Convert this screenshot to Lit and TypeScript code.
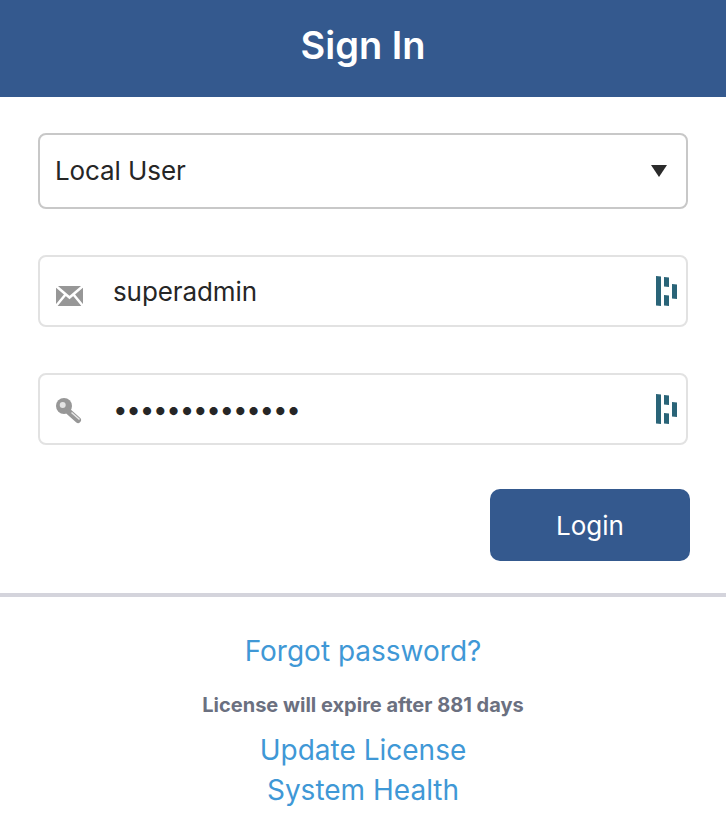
import { LitElement, html, css } from 'lit';
import { customElement } from 'lit/decorators.js';

@customElement('app-root')
export class AppRoot extends LitElement {
  static styles = css`
    :host {
      display: block;
      width: 726px;
      height: 826px;
      background: #fff;
      font-family: Inter, "Liberation Sans", sans-serif;
      color: #262626;
      overflow: hidden;
    }
    .header {
      box-sizing: border-box;
      height: 97px;
      padding-bottom: 8px;
      background: #34598e;
      color: #fff;
      display: flex;
      align-items: center;
      justify-content: center;
      font-size: 38px;
      font-weight: 600;
    }
    .form {
      height: 496px;
      box-sizing: border-box;
      padding: 36px 36px 0 38px;
      display: flex;
      flex-direction: column;
    }
    .select {
      box-sizing: border-box;
      width: 650px;
      height: 76px;
      border: 2px solid #c8c8c8;
      border-radius: 8px;
      padding: 0 19px 2px 15px;
      display: flex;
      align-items: center;
      justify-content: space-between;
      font-size: 26px;
      letter-spacing: -0.1px;
    }
    .arrow {
      width: 0;
      height: 0;
      margin-top: 2px;
      border-left: 8px solid transparent;
      border-right: 8px solid transparent;
      border-top: 12px solid #2b2b2b;
    }
    .field {
      box-sizing: border-box;
      width: 650px;
      height: 72px;
      border: 2px solid #e2e2e2;
      border-radius: 8px;
      margin-top: 46px;
      padding: 0 8px 0 15px;
      display: flex;
      align-items: center;
      font-size: 26px;
    }
    .lead {
      width: 30px;
      height: 30px;
      flex: none;
    }
    .value {
      flex: 1;
      margin-left: 28px;
      letter-spacing: -0.1px;
    }
    .dots {
      letter-spacing: -1.3px;
    }
    .dash { width: 24px; height: 32px; flex: none; }
    .actions {
      display: flex;
      justify-content: flex-end;
      margin-top: 44px;
    }
    .login {
      width: 200px;
      height: 72px;
      border-radius: 10px;
      background: #34598e;
      color: #fff;
      font-size: 26px;
      display: flex;
      align-items: center;
      justify-content: center;
    }
    .footer {
      border-top: 4px solid #d4d4dc;
      display: flex;
      flex-direction: column;
      align-items: center;
      padding-top: 34px;
    }
    .link {
      color: #3f98d6;
      font-size: 28px;
      line-height: 40px;
    }
    .license {
      color: #6b7080;
      font-size: 20px;
      font-weight: 700;
      line-height: 24px;
      margin: 22px 0 13px;
    }
  `;

  render() {
    return html`
      <div class="header">Sign In</div>
      <div class="form">
        <div class="select"><span>Local User</span><span class="arrow"></span></div>
        <div class="field">
          <svg class="lead" viewBox="0 0 30 30">
            <rect x="1" y="10" width="27" height="20" fill="#979797" />
            <path d="M1 10l13.500 11.500L28 10M1 30l9.500-11.500M28 30l-9.500-11.500" fill="none" stroke="#fff" stroke-width="2.500" />
          </svg>
          <span class="value">superadmin</span>
          ${this.dashIcon()}
        </div>
        <div class="field">
          <svg class="lead" viewBox="0 0 30 30">
            <circle cx="9" cy="12" r="8" fill="#979797" />
            <circle cx="7.700" cy="11" r="3" fill="#e4e4e4" />
            <path d="M14 18l9 8" stroke="#979797" stroke-width="6" stroke-linecap="round" />
            <path d="M16.500 18.500l8 7" stroke="#e8e8e8" stroke-width="1.500" />
          </svg>
          <span class="value dots">••••••••••••••</span>
          ${this.dashIcon()}
        </div>
        <div class="actions"><div class="login">Login</div></div>
      </div>
      <div class="footer">
        <span class="link">Forgot password?</span>
        <span class="license">License will expire after 881 days</span>
        <span class="link">Update License</span>
        <span class="link">System Health</span>
      </div>
    `;
  }

  dashIcon() {
    return html`<svg class="dash" viewBox="0 0 24 32">
      <path fill="#2a6478" d="M2 1l5 .5V31l-5-.5zM10 2l5 .5V12l-5-.5zM10 20l5 .5V31l-5-.5zM18 9l5 .5V24l-5-.5z" />
    </svg>`;
  }
}
